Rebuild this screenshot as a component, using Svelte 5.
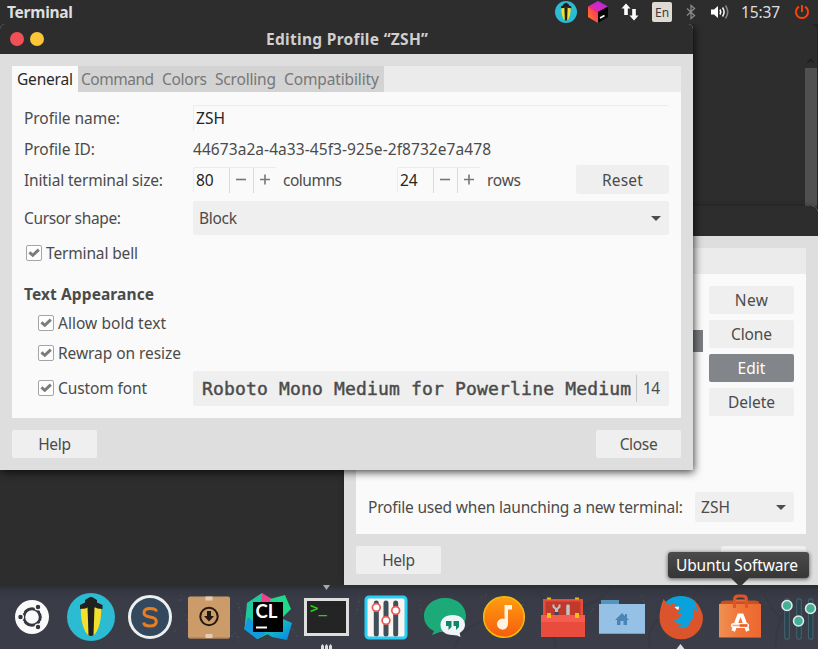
<script>
  // Tightens or loosens tracking so a label occupies its design width.
  function fit(node, width) {
    const natural = node.getBoundingClientRect().width;
    const gaps = node.textContent.length - 1;
    node.style.letterSpacing = `${(width - natural) / gaps}px`;
  }

  const tabs = [
    { name: 'Command', width: 73, cell: 81 },
    { name: 'Colors', width: 45, cell: 53 },
    { name: 'Scrolling', width: 61, cell: 69 },
    { name: 'Compatibility', width: 95, cell: 103 }
  ];
  const actions = [
    { name: 'New', width: 33 },
    { name: 'Clone', width: 41 },
    { name: 'Edit', width: 28 },
    { name: 'Delete', width: 47 }
  ];
  const options = [
    { name: 'Allow bold text', width: 108 },
    { name: 'Rewrap on resize', width: 123 }
  ];
  const apps = ['dash', 'lantern', 'sublime', 'archive', 'clion', 'terminal', 'mixer', 'hangouts', 'music', 'toolbox', 'files', 'firefox', 'software', 'sliders'];
</script>

{#snippet check()}
  <svg class="check" width="16" height="16" viewBox="0 0 16 16">
    <rect x=".5" y=".5" width="15" height="15" rx="1.5" fill="#fdfdfd" stroke="#a5a5a5" />
    <path d="M3.4 7.4 6.8 10.4 12.8 4.6" fill="none" stroke="#7b7b7b" stroke-width="2.9" />
  </svg>
{/snippet}

{#snippet spin(value)}
  <div class="spin">
    <span class="num">{value}</span>
    <span class="step"><svg width="12" height="12" viewBox="0 0 12 12"><path d="M0 5.5h10" stroke="#777" stroke-width="1.6" /></svg></span>
    <span class="step"><svg width="12" height="12" viewBox="0 0 12 12"><path d="M0 5.5h10M5 .5v10" stroke="#777" stroke-width="1.6" /></svg></span>
  </div>
{/snippet}

{#snippet lanternArt()}
  <circle cx="24" cy="24" r="24" fill="#2bbbd2" />
  <path d="M14 14h20c1 10-2 24-7 28h-6c-5-4-8-18-7-28Z" fill="#f2df2e" />
  <path d="M20.500 14h7L26.500 42q-2.500 2-5 0Z" fill="#202020" />
  <path d="M13 16v-4l5-2.500V7l5-3h2l5 3v2.500L35.500 12v4l-5-.5-2-1h-8l-2 1Z" fill="#202020" />
{/snippet}

<div class="desktop">
  <div class="termwin"><span class="up"></span><div class="scroll"></div></div>

  <section class="prefs">
    <div class="bar"></div>
    <div class="body">
      <div class="strip"></div>
      <div class="pane">
        <div class="list"><div class="selected"></div></div>
        <div class="actions">
          {#each actions as a}
            <button class:active={a.name === 'Edit'}><span use:fit={a.width}>{a.name}</span></button>
          {/each}
        </div>
        <div class="launch">
          <span use:fit={315}>Profile used when launching a new terminal:</span>
          <div class="combo small"><span use:fit={29}>ZSH</span><i class="arrow"></i></div>
        </div>
      </div>
      <div class="foot"><button><span use:fit={33}>Help</span></button><button aria-label="Close"></button></div>
    </div>
  </section>

  <section class="dialog">
    <header class="title">
      <i class="dot red"></i><i class="dot yellow"></i>
      <b><span use:fit={162}>Editing Profile “ZSH”</span></b>
    </header>
    <div class="body">
      <nav>
        <div class="tab on"><span use:fit={56}>General</span></div>
        {#each tabs as t}
          <div class="tab" style:width="{t.cell}px"><span use:fit={t.width}>{t.name}</span></div>
        {/each}
      </nav>
      <div class="pane">
        <div class="row"><span class="label"><span use:fit={96}>Profile name:</span></span><div class="entry"><span use:fit={29}>ZSH</span></div></div>
        <div class="row"><span class="label"><span use:fit={71}>Profile ID:</span></span><span use:fit={298}>44673a2a-4a33-45f3-925e-2f8732e7a478</span></div>
        <div class="row">
          <span class="label"><span use:fit={139}>Initial terminal size:</span></span>
          {@render spin('80')}<span class="unit wide"><span use:fit={59}>columns</span></span>
          {@render spin('24')}<span class="unit"><span use:fit={34}>rows</span></span>
          <button class="reset"><span use:fit={41}>Reset</span></button>
        </div>
        <div class="row tall">
          <span class="label"><span use:fit={97}>Cursor shape:</span></span>
          <div class="combo"><span use:fit={38}>Block</span><i class="arrow"></i></div>
        </div>
        <div class="row bell">{@render check()}<span use:fit={92}>Terminal bell</span></div>
        <h2><span use:fit={130}>Text Appearance</span></h2>
        {#each options as o}
          <div class="row option">{@render check()}<span use:fit={o.width}>{o.name}</span></div>
        {/each}
        <div class="row option custom">
          <div class="toggle">{@render check()}<span use:fit={89}>Custom font</span></div>
          <div class="fontbtn"><span class="face"><span use:fit={429}>Roboto Mono Medium for Powerline Medium</span></span><span class="pt"><span use:fit={17}>14</span></span></div>
        </div>
      </div>
      <div class="foot"><button><span use:fit={33}>Help</span></button><button><span use:fit={38}>Close</span></button></div>
    </div>
  </section>

  <header class="top">
    <b><span use:fit={66}>Terminal</span></b>
    <svg class="tray-lantern" width="22" height="22" viewBox="0 0 48 48">{@render lanternArt()}</svg>
    <svg class="tray-box" width="20" height="22" viewBox="0 0 20 22">
      <defs>
        <linearGradient id="boxA" x1="0" y1="1" x2="1" y2="0"><stop offset="0" stop-color="#ff3b63" /><stop offset=".4" stop-color="#d826c0" /><stop offset="1" stop-color="#a92be8" /></linearGradient>
        <linearGradient id="boxB" x1="0" y1="1" x2="1" y2="0"><stop offset="0" stop-color="#ff8a25" /><stop offset=".5" stop-color="#ff5045" /><stop offset="1" stop-color="#ee2a80" /></linearGradient>
      </defs>
      <path d="M0 5.500 10 0l10 5.500-10 5.500Z" fill="url(#boxA)" /><path d="M20 5.500V16l-10 6V11Z" fill="#050505" />
      <path d="M0 5.500 10 11v11L0 16Z" fill="url(#boxB)" /><path d="m12 17 4.500-2.500" stroke="#fff" stroke-width="1.6" />
    </svg>
    <svg class="tray-net" width="18" height="18" viewBox="0 0 18 18" fill="#fff"><path d="m5 .5 4.500 5H6.800v6.500H3.200V5.500H.5ZM13 17.500l-4.500-5h2.700V6h3.600v6.500h2.700Z" /></svg>
    <span class="lang">En</span>
    <svg class="tray-bt" width="10" height="16" viewBox="0 0 10 16" fill="none" stroke="#8a8a8a" stroke-width="1.300"><path d="m1 4.500 7.500 7L5 14.500V1.500l3.500 3-7.500 7" /></svg>
    <svg class="tray-vol" width="20" height="18" viewBox="0 0 20 18"><path d="M1 6.500h3L8 3v12l-4-3.500H1Z" fill="#fff" /><g fill="none" stroke-width="1.600"><path d="M10 6.500q1.500 2.500 0 5" stroke="#fff" /><path d="M12.500 4.500q3.200 4.500 0 9" stroke="#eee" /><path d="M15.500 2.500q4.500 6.500 0 13" stroke="#858585" /></g></svg>
    <span class="clock"><span use:fit={39}>15:37</span></span>
    <svg class="tray-power" width="16" height="16" viewBox="0 0 16 16" fill="none" stroke="#fb4209" stroke-width="1.900"><path d="M5 2.600a6.100 6.100 0 1 0 6 0M8 1v7" /></svg>
  </header>

  <footer class="dock">
    <svg class="branches" width="818" height="64" viewBox="0 0 818 64" fill="none" stroke="#30333d" stroke-width="2" opacity=".3">
      <path d="M556 64q-8-26 25-42 24-8 30-20M570 30q-22-6-35-28M580 22l-2-20M650 64q-6-24 18-35 14-8 16-25M672 26q22-8 27-24M776 64q-2-30 18-46M783 34q-14-8-20-30M455 64q4-20 28-28" />
      <path d="M181 10v8M186 30l3 12M178 42l-5 7M238 18l5 17M290 40l7 12M360 12l-4 18M420 20l2 11M481 12l7-3M522 15l2 12M596 20l-7 10M641 11l4 9M763 14l5 7M232 46v8M235 48l5 8" stroke="#85827e" stroke-width="1" stroke-dasharray="1 3 2 2" />
    </svg>
    {#each apps as app}
      <div class="app">
        <svg width="56" height="56" viewBox="0 0 56 56">
          {#if app === 'dash'}
            <circle cx="28" cy="28" r="17" fill="#fafafa" />
            <circle cx="28" cy="28" r="8.300" fill="none" stroke="#343741" stroke-width="3" />
            <g fill="#343741" stroke="#fafafa" stroke-width="1.300"><circle cx="16.500" cy="28" r="2.900" /><circle cx="34" cy="18" r="2.900" /><circle cx="34" cy="38" r="2.900" /></g>
            <path d="m20 24-3-2M20 32l-3 2M36 24l3-2M36 32l3 2" stroke="#fafafa" />
          {:else if app === 'lantern'}
            <g transform="translate(4 4)">{@render lanternArt()}</g>
          {:else if app === 'sublime'}
            <circle cx="28" cy="28" r="20.500" fill="#34495e" stroke="#edf0f1" stroke-width="3" />
            <path d="M34.500 22.500Q34 19.500 28 19.500q-6 0-6 4.300 0 3.500 6 4.200 6.300.7 6.300 4.500 0 4.500-6.300 4.500-6 0-6.300-3.500" fill="none" stroke="#e67e22" stroke-width="3" />
          {:else if app === 'archive'}
            <rect x="7" y="7.500" width="42" height="42" rx="2" fill="#cb9b6a" /><path d="M8 49h40" stroke="#a97c4f" />
            <path d="M24.500 7.500h7v4h-7ZM24.500 45h7v4h-7Z" fill="#e5cdb5" />
            <circle cx="28" cy="27.500" r="8.700" fill="none" stroke="#211810" stroke-width="2" /><path d="M26 22h4v5h3l-5 5.500-5-5.500h3Z" fill="#211810" />
          {:else if app === 'clion'}
            <defs><linearGradient id="cl" x1="0" y1="0" x2="1" y2="1"><stop offset="0" stop-color="#21d789" /><stop offset=".5" stop-color="#12b0cc" /><stop offset="1" stop-color="#0882e8" /></linearGradient></defs>
            <path d="M22 4 7 14 4.500 40l13 10L30 44Z" fill="#20c99c" /><path d="m8 28-4 12 13 10 10-6Z" fill="#139bdf" />
            <path d="m22 4 10 6-1 10H21Z" fill="#ef428c" /><path d="m30 10 15-4 6 14-10 10-10-12Z" fill="#21d789" />
            <path d="m24 43 19-13 9 4-5 17-15-3Z" fill="url(#cl)" />
            <rect x="13" y="13" width="30" height="30" fill="#000" /><text x="15.500" y="29" class="cl" textLength="22" lengthAdjust="spacingAndGlyphs">CL</text><path d="M16 38.500h11" stroke="#fff" stroke-width="2" />
          {:else if app === 'terminal'}
            <rect x="6.500" y="10.500" width="42" height="35" fill="#242424" stroke="#dedede" stroke-width="3" />
            <text x="11" y="23.500" class="prompt">&gt;_</text>
          {:else if app === 'mixer'}
            <rect x="8" y="8" width="40" height="41" rx="3" fill="#fbf4f0" stroke="#27cff6" stroke-width="3" />
            <path d="M18.300 14v31M28 14v31M37.700 14v31" stroke="#40505a" stroke-width="5" stroke-linecap="round" />
            <g fill="#fff" stroke="#ed5454" stroke-width="1.700"><circle cx="18.300" cy="18.500" r="3.900" /><circle cx="28" cy="31.500" r="3.900" /><circle cx="37.700" cy="21.500" r="3.900" /></g>
          {:else if app === 'hangouts'}
            <path d="M28 9C16 9 7 17 7 27c0 7 4 12 10 15l-2 4 8-3C40 44 49 37 49 27S40 9 28 9Z" fill="#1daa79" />
            <path d="M35.500 26c-7 0-12 4-12 10s5 10 12 10q5 0 8 2l-.8-4C46 42 48 39 48 36c0-6-5-10-12.500-10Z" fill="#eef4f7" />
            <path d="M29 32h5.500v6l-3 3v-4H29ZM36.500 32H42v6l-3 3v-4h-2.500Z" fill="#138567" />
          {:else if app === 'music'}
            <defs><linearGradient id="mu" x2="0" y2="1"><stop stop-color="#ff9e10" /><stop offset="1" stop-color="#f65c0d" /></linearGradient></defs>
            <circle cx="28" cy="28" r="20.300" fill="url(#mu)" stroke="#f4bd10" stroke-width="1.500" />
            <path d="M28.500 16H36v4.500h-4V35a5.500 5.500 0 1 1-3.500-5Z" fill="#fff4e4" />
          {:else if app === 'toolbox'}
            <path d="M8 10h40v18H8Z" fill="#e74c3c" /><path d="M10.500 12.500h35v15h-35Z" fill="#c0392b" />
            <path d="M12 9.500h4M40 9.500h4" stroke="#eabb0e" stroke-width="2" />
            <path d="M18.500 15.500v2.300l3 2.700 3-2.700v-2.300" fill="none" stroke="#bdc3c7" stroke-width="2" /><path d="M21.500 19.500v3.500" stroke="#bdc3c7" stroke-width="3" /><path d="M21.500 23v3" stroke="#34495e" stroke-width="4" /><path d="M33 17v9" stroke="#bdc3c7" stroke-width="3.500" stroke-linecap="round" />
            <path d="M6 26h44v22H6Z" fill="#e94c3c" /><path d="M6 26h44v7H6Z" fill="#f45c4f" />
            <path d="M12 24h4v5h-4ZM40 24h4v5h-4Z" fill="#efc012" />
          {:else if app === 'files'}
            <path d="M7 11h18v7H7Z" fill="#5694bc" /><rect x="5" y="15" width="46" height="30" fill="#95c1e6" /><path d="M5 44.500h46" stroke="#6fa3ca" />
            <path d="m21 31 7-7 3 3v-2h2v4l2 2h-2v5h-3.500v-4h-3v4H23v-5Z" fill="#4a86b5" />
          {:else if app === 'firefox'}
            <path d="M6.500 29q0-9 4-19l4 5C22 7 35 5 42 12q4 4 6 9 2 5 2 8a21.700 21.300 0 0 1-43.500 0Z" fill="#dc542c" />
            <path d="M12.500 13Q19 7 27 7q9 0 14 5 3 4 3 11l-4-5 .5 7q0 5-3 7-1 5-6 7-4 1-7-2 3 1 5-2-6 1-9-5 3 1 6-1l2-4-7-1-1-8-6 0Z" fill="#0aa2dc" />
            <path d="m12 13 5 3q3-2 5-1l-.5 4h6l-.5 3-5 3 .5 3-3 2-8-10Z" fill="#dc542c" />
            <path d="m21.500 18 4.500-.5-.5 3.500-2-1Z" fill="#fff" />
          {:else if app === 'software'}
            <defs><linearGradient id="so" x1="0" y1="0" x2="1" y2="0"><stop stop-color="#ee9154" /><stop offset=".5" stop-color="#f17438" /><stop offset="1" stop-color="#eb6830" /></linearGradient></defs>
            <path d="m10 12 4-.5h28l4 .5 2 3H8Z" fill="#c95120" /><path d="M7 15h42v34H7Z" fill="url(#so)" /><path d="M7 48.500h42" stroke="#c34e20" />
            <path d="M22.500 19v-8q0-4 3.500-4h5q3.500 0 3.500 4v8" fill="none" stroke="#dd5529" stroke-width="3" /><path d="M24 11.500h9" stroke="#e7683b" stroke-width="2" />
            <path d="m21.200 42 5.800-15.500h3L35.800 42" fill="none" stroke="#fff" stroke-width="3.800" /><rect x="19" y="34" width="18" height="5" rx="2.500" fill="#fff" /><path d="M20.500 36.500h7" stroke="#f6a883" stroke-width="1.600" /><path d="M27.500 36.500h8" stroke="#ed5b23" stroke-width="2.600" />
          {:else}
            <path d="M16 12v36M28 12v36M39.700 12v36" stroke="#47666e" stroke-width="5.500" stroke-linecap="round" /><path d="M16 12v36M28 12v36M39.700 12v36" stroke="#29434e" stroke-width="3.600" stroke-linecap="round" />
            <g fill="#43b097" stroke="#e4ebe9" stroke-width="1.500"><circle cx="16" cy="16.500" r="5" /><circle cx="27.500" cy="32" r="5" /><circle cx="39.500" cy="19.500" r="5" /></g>
          {/if}
        </svg>
      </div>
    {/each}
    <svg class="marks" width="818" height="64" viewBox="0 0 818 64"><path d="M323 0h7l-3.500 5Z" fill="#aaa" /><path d="M321 64v-3l1.500-2 1.500 2v3ZM325 64v-3l1.500-2 1.500 2v3ZM329 64v-3l1.500-2 1.500 2v3ZM676.500 64l4-5 4 5Z" fill="#ddd" /></svg>
  </footer>

  <div class="tooltip"><span use:fit={122}>Ubuntu Software</span></div>
</div>

<style>
  :global(body) { margin: 0; overflow: hidden; }
  .desktop { position: relative; width: 818px; height: 649px; overflow: hidden; background: #242424; color: #4b4b4b; font: 15.5px/20px "Noto Sans", "Open Sans", sans-serif; white-space: nowrap; }
  .desktop * { box-sizing: border-box; }
  .top { position: absolute; left: 0; top: 0; width: 818px; height: 24px; display: flex; align-items: center; background: #2d2d2d; color: #dedede; padding-left: 7px; }
  .top b { width: 548px; }
  .top svg, .top span.lang { flex: none; }
  .tray-box { margin-left: 11px; }
  .tray-net { margin-left: 13px; }
  .lang { width: 20px; height: 20px; margin-left: 13px; border-radius: 2px; background: #dfdbd2; color: #3c3c3c; font-size: 12px; line-height: 21px; text-align: center; }
  .tray-bt { margin-left: 14px; }
  .tray-vol { margin-left: 14px; }
  .clock { width: 41px; margin-left: 11px; }
  .tray-power { margin-left: 12px; }

  .termwin { position: absolute; left: 0; top: 24px; width: 817px; height: 561px; background: #2d2d2d; border-radius: 0 6px 0 0; display: flex; flex-direction: column; align-items: flex-end; padding-top: 35px; }
  .up { width: 5px; height: 5px; margin: 1px 4px 3px; border: solid #191919; border-width: 1px 0 0 1px; transform: rotate(45deg); }
  .scroll { width: 12px; height: 138px; background: #505050; }

  .prefs { position: absolute; left: 344px; top: 206px; width: 474px; height: 379px; background: #dedede; box-shadow: 0 0 6px rgba(0, 0, 0, .3); border-radius: 0 6px 0 0; overflow: hidden; }
  .bar { height: 30px; background: #2d2d2d; }
  .body { padding: 12px; }
  .strip { height: 26px; background: #ebebeb; }
  .prefs .pane { height: 260px; display: grid; grid-template: 206px 30px / 1fr 85px; padding: 12px; column-gap: 6px; background: #fafafa; }
  .list { padding-top: 44px; }
  .selected { height: 22px; background: #7a7c7f; }
  .actions { display: flex; flex-direction: column; gap: 6px; }
  .launch { grid-column: 1 / 3; display: flex; align-items: center; justify-content: space-between; }
  button { display: flex; align-items: center; justify-content: center; width: 85px; height: 28px; padding: 0; border: 0; border-radius: 2px; background: #efefef; color: inherit; font: inherit; }
  button.active { background: #828589; color: #fff; }
  .foot { display: flex; justify-content: space-between; margin-top: 12px; }
  .combo { flex: 1; height: 34px; display: flex; align-items: center; justify-content: space-between; padding: 0 8px 0 6px; border-radius: 2px; background: #efefef; }
  .combo.small { flex: none; width: 99px; height: 30px; }
  .arrow { border: 5px solid transparent; border-top-color: #4d4d4d; border-bottom: 0; }

  .dialog { position: absolute; left: 0; top: 24px; width: 693px; height: 446px; background: #dedede; border-radius: 5px 5px 0 0; box-shadow: 1px 2px 8px rgba(0, 0, 0, .75); }
  .title { height: 30px; display: flex; align-items: center; padding-left: 10px; background: #2d2d2d; color: #d0cfcd; border-radius: 5px 5px 0 0; }
  .title b { margin-left: 216px; }
  .dot { width: 14px; height: 14px; border-radius: 50%; margin-right: 6px; }
  .red { background: #f25056; }
  .yellow { background: #fac536; }
  nav { display: flex; height: 26px; background: #ebebeb; }
  .tab { flex: none; display: flex; align-items: center; padding-left: 3px; background: #d3d3d3; color: #777; }
  .tab.on { width: 66px; padding-left: 5px; background: #fafafa; color: #292929; }
  .dialog .pane { height: 326px; padding: 10px 12px 0; background: #fafafa; }
  .row { display: flex; align-items: center; height: 31px; }
  .label { flex: none; width: 169px; }
  .entry { flex: 1; height: 26px; padding: 2px; border: 1px solid #ececec; border-right: 0; border-bottom: 0; border-radius: 2px 2px 0 0; color: #242424; }
  .spin { flex: none; display: flex; width: 84px; height: 26px; border: 1px solid #ececec; border-width: 1px 0 0 1px; border-radius: 2px; color: #242424; }
  .num { margin: 2px 0; padding-left: 2px; flex: 1; }
  .step { width: 24px; display: flex; align-items: center; justify-content: center; border-left: 1px solid #dadada; }
  .unit { margin-left: 6px; }
  .unit.wide { width: 114px; }
  .reset { width: 93px; height: 29px; margin-left: auto; }
  .tall { height: 44px; margin-top: 1px; }
  .bell { height: 26px; padding-left: 2px; }
  .check { flex: none; margin-right: 4px; }
  h2 { height: 28px; margin: 14px 0 0; font: bold 15.500px/28px "Noto Sans", sans-serif; }
  .option { height: 30px; padding-left: 14px; }
  .custom { height: 40px; }
  .toggle { display: flex; align-items: center; width: 155px; }
  .fontbtn { flex: 1; height: 35px; display: flex; align-items: center; background: #efefef; border-radius: 2px; }
  .face { width: 443px; padding-left: 9px; font: 18px/35px "DejaVu Sans Mono", monospace; -webkit-text-stroke: .45px #4b4b4b; }
  .pt { height: 27px; border-left: 1px solid #c5c5c5; padding: 3px 6px; }

  .dock { position: absolute; left: 0; top: 585px; width: 818px; height: 64px; display: flex; padding: 4px 0 0 2.500px; overflow: hidden; background: linear-gradient(#2b2c31, #343640 5px, #393c47 13px, #3b3e49); }
  .branches, .marks { position: absolute; left: 0; top: 0; }
  .app { position: relative; flex: none; width: 59px; }
  .app svg { display: block; margin: 0 auto; }
  .cl { font: bold 18px Lato, sans-serif; fill: #fff; }
  .prompt { font: bold 14px "DejaVu Sans Mono", monospace; fill: #16d80d; }
  .tooltip { position: absolute; left: 668px; top: 552px; width: 141px; height: 26px; border-radius: 3px; background: linear-gradient(#4b4b4b, #363636); color: #fff; padding: 3px 8px; box-shadow: 0 1px 4px rgba(0, 0, 0, .65); }
  .tooltip::after { content: ""; position: absolute; left: 63px; top: 26px; border: 9px solid transparent; border-top-color: #363636; border-bottom: 0; }
</style>
